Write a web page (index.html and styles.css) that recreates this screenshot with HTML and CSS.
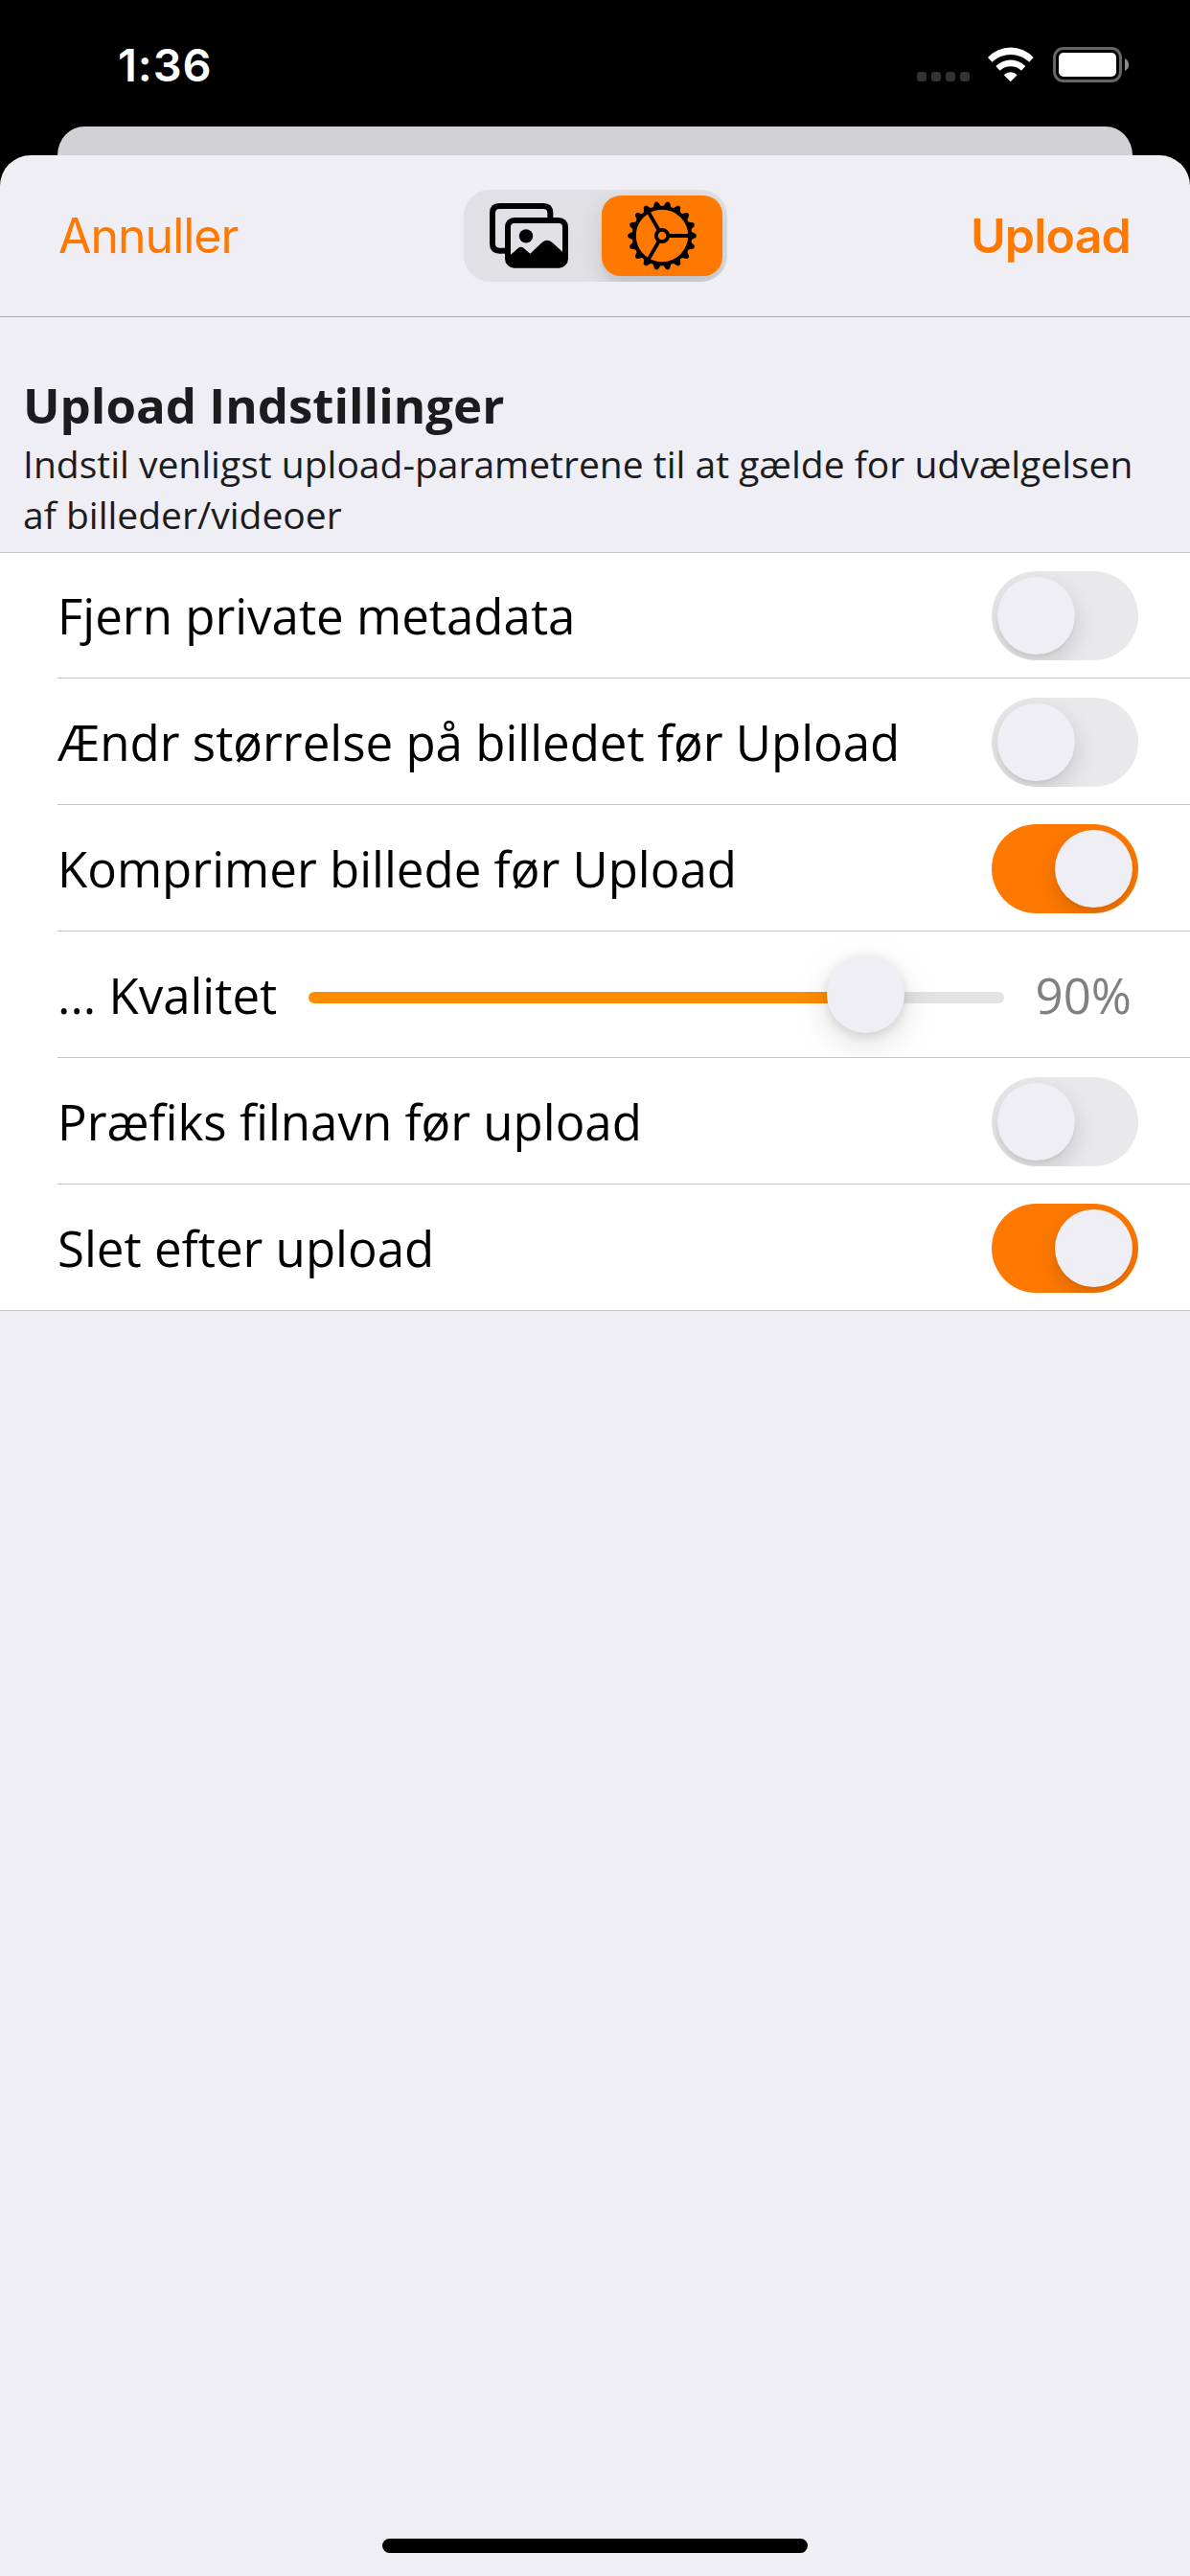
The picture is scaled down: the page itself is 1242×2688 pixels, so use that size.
FILE: index.html
```html
<!DOCTYPE html>
<html lang="da">
<head>
<meta charset="utf-8">
<title>Upload Indstillinger</title>
<link rel="stylesheet" href="styles.css">
</head>
<body>
<div class="screen">
  <header class="status">
    <span class="time">1:36</span>
    <div class="indicators">
      <div class="cell"><i></i><i></i><i></i><i></i></div>
      <svg class="wifi" viewBox="335 86 144 111" fill="#fff">
        <path d="M335 119A97 97 0 0 1 478 119L465 133A85 85 0 0 0 348 133Z"/>
        <path d="M360 146A65 65 0 0 1 453 146L440 160A50 50 0 0 0 373 160Z"/>
        <path d="M385 174A29 29 0 0 1 427 174L406 195Z"/>
      </svg>
      <svg class="battery" viewBox="0 0 79 37">
        <rect x="1.5" y="1.5" width="69" height="34" rx="9.5" fill="none" stroke="#666" stroke-width="3"/>
        <rect x="6" y="6" width="60" height="25" rx="5" fill="#fff"/>
        <path d="M75 12Q79 14 79 18.5T75 25Z" fill="#8c8c8c"/>
      </svg>
    </div>
  </header>
  <div class="back-card"></div>
  <main class="sheet">
    <nav class="nav">
      <a class="cancel">Annuller</a>
      <div class="segmented">
        <div class="segment">
          <svg class="photos" viewBox="123 97 246 204">
            <path d="M162 246H154Q132 246 132 224V128Q132 106 154 106H291Q313 106 313 128V144" fill="none" stroke="#000" stroke-width="18"/>
            <rect x="180" y="151" width="180" height="140" rx="20" fill="none" stroke="#000" stroke-width="18"/>
            <path d="M162 237H174V255H162Z"/>
            <circle cx="237" cy="200" r="21.500"/>
            <path d="M185 262L212 238Q221 230 230 238L250 255L288 219Q303 207 318 219L355 253V275Q355 292 340 292H200Q185 292 185 275Z"/>
          </svg>
        </div>
        <div class="segment selected">
          <svg class="gear" viewBox="-36 -36 72 72">
            <defs><path id="tooth" d="M30-4.500L35-2Q36.800 0 35 2L30 4.500Z"/></defs>
            <g fill="none" stroke="#000">
              <circle r="29.200" stroke-width="4"/>
              <circle r="6.200" stroke-width="3.800"/>
              <path stroke-width="3.800" d="M7.500 0H29M-3.750-6.500L-14.500-25.100M-3.750 6.500L-14.500 25.100"/>
            </g>
            <use href="#tooth"/>
            <use href="#tooth" transform="rotate(20)"/>
            <use href="#tooth" transform="rotate(40)"/>
            <use href="#tooth" transform="rotate(60)"/>
            <use href="#tooth" transform="rotate(80)"/>
            <use href="#tooth" transform="rotate(100)"/>
            <use href="#tooth" transform="rotate(120)"/>
            <use href="#tooth" transform="rotate(140)"/>
            <use href="#tooth" transform="rotate(160)"/>
            <use href="#tooth" transform="rotate(180)"/>
            <use href="#tooth" transform="rotate(200)"/>
            <use href="#tooth" transform="rotate(220)"/>
            <use href="#tooth" transform="rotate(240)"/>
            <use href="#tooth" transform="rotate(260)"/>
            <use href="#tooth" transform="rotate(280)"/>
            <use href="#tooth" transform="rotate(300)"/>
            <use href="#tooth" transform="rotate(320)"/>
            <use href="#tooth" transform="rotate(340)"/>
          </svg>
        </div>
      </div>
      <a class="submit">Upload</a>
    </nav>
    <section class="intro">
      <h1>Upload Indstillinger</h1>
      <p>Indstil venligst upload-parametrene til at gælde for udvælgelsen<br>af billeder/videoer</p>
    </section>
    <div class="list">
      <div class="row first"><span>Fjern private metadata</span><div class="toggle"><b></b></div></div>
      <div class="row"><span>Ændr størrelse på billedet før Upload</span><div class="toggle"><b></b></div></div>
      <div class="row"><span>Komprimer billede før Upload</span><div class="toggle on"><b></b></div></div>
      <div class="row quality">
        <span>... Kvalitet</span>
        <div class="slider"><div class="fill"></div><b></b><div class="rest"></div></div>
        <span class="value">90%</span>
      </div>
      <div class="row"><span>Præfiks filnavn før upload</span><div class="toggle"><b></b></div></div>
      <div class="row last"><span>Slet efter upload</span><div class="toggle on"><b></b></div></div>
    </div>
    <div class="home"></div>
  </main>
</div>
</body>
</html>
```
FILE: styles.css
```css
* { box-sizing: border-box; }
body { margin: 0; background: #000; }
.screen {
  width: 1242px;
  height: 2688px;
  display: flex;
  flex-direction: column;
  background: #000;
  overflow: hidden;
  font-family: "Open Sans", "Noto Sans", sans-serif;
}
svg { display: block; }

.status {
  height: 132px;
  display: flex;
  justify-content: space-between;
  align-items: flex-start;
  padding: 0 64px 0 123px;
}
.time {
  padding-top: 39px;
  font: 600 47px/58px Inter, "Liberation Sans", sans-serif;
  letter-spacing: 0.9px;
  color: #fff;
}
.indicators { display: flex; padding-top: 49px; }
.cell { display: flex; gap: 5px; padding-top: 26px; margin-right: 19px; }
.cell i { width: 10px; height: 10px; border-radius: 3px; background: #333; }
.wifi { width: 48px; height: 37px; margin-right: 20px; }
.battery { width: 79px; height: 37px; }

.back-card {
  height: 30px;
  margin: 0 60px;
  background: #d2d1d6;
  border-radius: 28px 28px 0 0 / 30px 30px 0 0;
}
.sheet {
  flex: 1;
  display: flex;
  flex-direction: column;
  background: #efeef4;
  border-radius: 32px 32px 0 0;
}
.nav {
  height: 169px;
  display: grid;
  grid-template-columns: 1fr 275px 1fr;
  align-items: center;
  padding: 0 62px 1px;
  border-bottom: 1px solid #a7a6ab;
  font-family: Inter, "Liberation Sans", sans-serif;
  color: #ff7900;
}
.cancel { margin-left: -1px; font-size: 50px; letter-spacing: -1px; }
.submit { font-size: 50px; font-weight: 600; text-align: right; letter-spacing: -0.8px; }
.segmented {
  height: 96px;
  display: flex;
  justify-content: space-between;
  padding: 6px 5px 6px 0;
  border-radius: 27px;
  background: #e1e0e5;
  overflow: hidden;
}
.segment { width: 136px; display: flex; align-items: center; justify-content: center; }
.segment.selected {
  width: 126px;
  border-radius: 20px;
  background: #ff7900;
  box-shadow: 0 9px 24px rgba(0, 0, 0, .12), 0 9px 3px rgba(0, 0, 0, .03);
}
.photos { width: 82px; height: 68px; }
.gear { width: 72px; height: 72px; }

.intro { height: 245px; padding: 57px 24px 0; color: #1c1c1e; }
h1 { margin: 0; font-size: 51px; line-height: 69px; font-weight: 700; }
p { margin: 0; font-size: 39px; line-height: 53px; white-space: nowrap; }

.list { background: #fff; border-top: 1px solid #c6c5ca; border-bottom: 1px solid #c6c5ca; color: #000; }
.row {
  height: 132px;
  margin-left: 60px;
  padding-right: 54px;
  display: flex;
  align-items: center;
  justify-content: space-between;
  border-bottom: 1px solid #c6c6c8;
  font-size: 51px;
  line-height: 70px;
  white-space: nowrap;
}
.row.first { height: 131px; }
.row.last { height: 131px; border-bottom: 0; }
.toggle {
  width: 153px;
  height: 93px;
  margin-top: 2px;
  padding: 6px;
  display: flex;
  border-radius: 47px;
  background: #e9e9eb;
  overflow: hidden;
}
.first .toggle { margin-top: 1px; }
.toggle.on { background: #ff7900; justify-content: flex-end; }
.toggle b {
  width: 81px;
  height: 81px;
  border-radius: 50%;
  background: #efeef4;
  box-shadow: 0 9px 24px rgba(0, 0, 0, .15), 0 3px 3px rgba(0, 0, 0, .04);
}
.quality { padding-right: 61px; overflow: hidden; }
.slider {
  width: 726px;
  height: 81px;
  display: flex;
  align-items: center;
  margin-left: auto;
  margin-right: 33px;
}
.slider b {
  z-index: 1;
  width: 81px;
  height: 81px;
  margin: 0 -1px;
  border-radius: 50%;
  background: #efeef4;
  box-shadow: 0 12px 39px rgba(0, 0, 0, .13), 0 3px 12px rgba(0, 0, 0, .13);
}
.fill, .rest { height: 12px; margin-top: 7px; }
.fill { width: 542px; background: #ff8c00; border-radius: 6px 0 0 6px; }
.rest { flex: 1; background: #e3e3e5; border-radius: 0 6px 6px 0; }
.value { color: #808080; }

.home {
  width: 444px;
  height: 15px;
  margin: auto auto 24px;
  border-radius: 8px;
  background: #000;
}
```
